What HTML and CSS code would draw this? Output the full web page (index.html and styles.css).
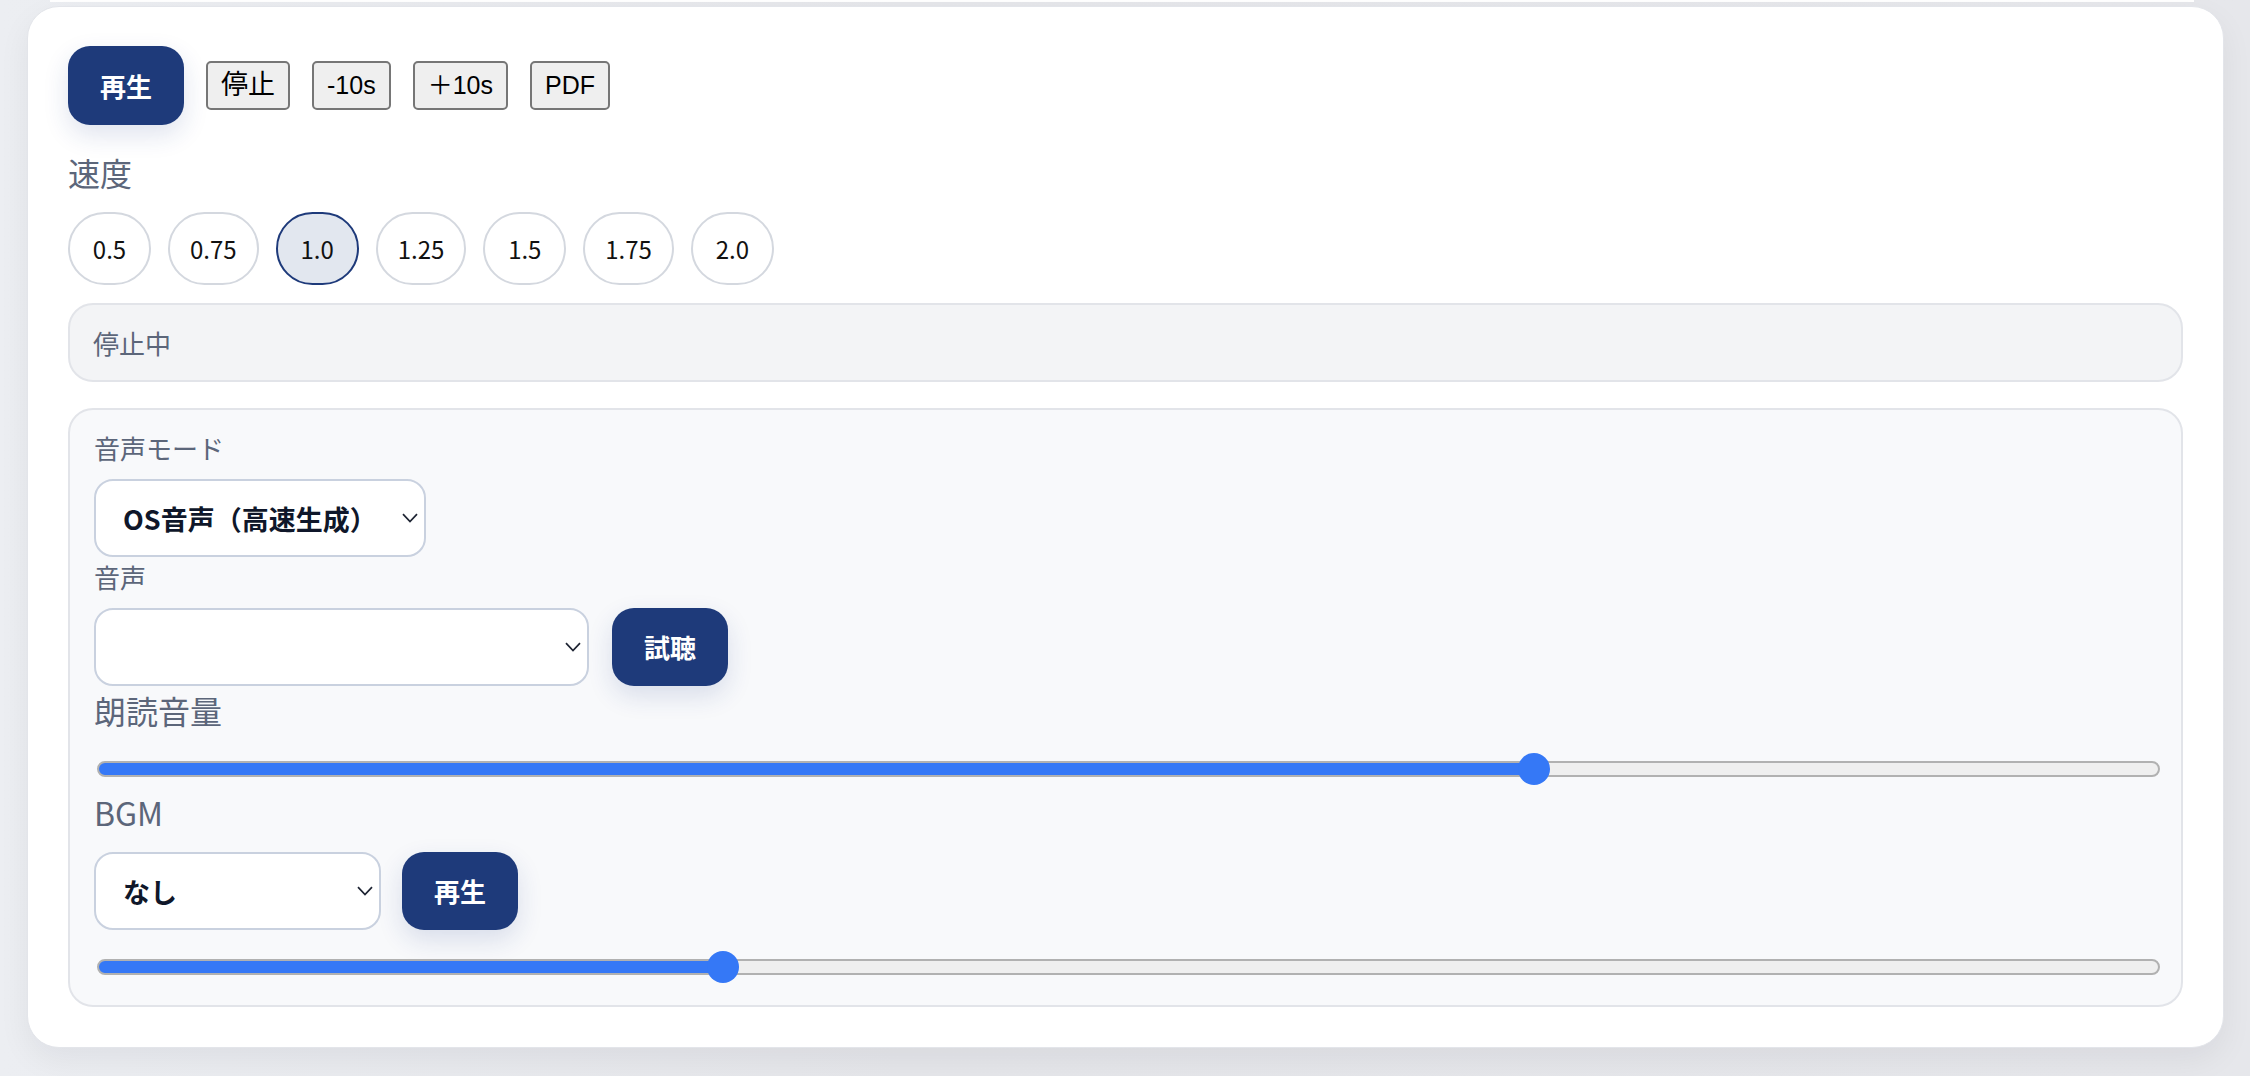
FILE: index.html
```html
<!DOCTYPE html>
<html lang="ja">
<head>
<meta charset="utf-8">
<title>Player</title>
<link rel="stylesheet" href="styles.css">
</head>
<body>
<div class="page">
  <div class="prev-edge"></div>
  <main class="card">
    <div class="controls">
      <button class="btn-primary">再生</button>
      <button class="btn-plain btn-cjk">停止</button>
      <button class="btn-plain">-10s</button>
      <button class="btn-plain">＋10s</button>
      <button class="btn-plain">PDF</button>
    </div>
    <div class="label-lg speed-label">速度</div>
    <div class="speeds">
      <button class="pill">0.5</button>
      <button class="pill">0.75</button>
      <button class="pill active">1.0</button>
      <button class="pill">1.25</button>
      <button class="pill">1.5</button>
      <button class="pill">1.75</button>
      <button class="pill">2.0</button>
    </div>
    <div class="status">停止中</div>
    <section class="panel">
      <div class="label-sm">音声モード</div>
      <div class="select-wrap mode">
        <select class="select"><option>OS音声（高速生成）</option></select>
        <svg class="chev" viewBox="0 0 16 10" aria-hidden="true"><path d="M1 1.2 L8 8.6 L15 1.2" fill="none" stroke="#1e2433" stroke-width="1.7"/></svg>
      </div>
      <div class="label-sm voice-label">音声</div>
      <div class="row">
        <div class="select-wrap voice">
          <select class="select"><option></option></select>
          <svg class="chev" viewBox="0 0 16 10" aria-hidden="true"><path d="M1 1.2 L8 8.6 L15 1.2" fill="none" stroke="#1e2433" stroke-width="1.7"/></svg>
        </div>
        <button class="btn-primary btn-row">試聴</button>
      </div>
      <div class="label-lg vol-label">朗読音量</div>
      <input class="range" type="range" min="0" max="100" value="70" style="--v:0.7">
      <div class="label-lg bgm-label">BGM</div>
      <div class="row bgm-row">
        <div class="select-wrap bgm">
          <select class="select"><option>なし</option></select>
          <svg class="chev" viewBox="0 0 16 10" aria-hidden="true"><path d="M1 1.2 L8 8.6 L15 1.2" fill="none" stroke="#1e2433" stroke-width="1.7"/></svg>
        </div>
        <button class="btn-primary btn-row">再生</button>
      </div>
      <input class="range" type="range" min="0" max="100" value="30" style="--v:0.3">
    </section>
  </main>
</div>
</body>
</html>
```
FILE: styles.css
```css
* { box-sizing: border-box; }
html, body { margin: 0; padding: 0; }
body {
  width: 2250px;
  height: 1076px;
  overflow: hidden;
  background: linear-gradient(90deg, #eceef2 0%, #e5e6ea 40%, #e6e7eb 100%);
  font-family: "Noto Sans CJK JP", "Noto Sans", sans-serif;
}
.page { padding: 0 26px 0 27px; }
.prev-edge {
  height: 2px;
  margin: 0 30px 4px 23px;
  background: #ffffff;
}
.card {
  background: #ffffff;
  border: 1px solid #e3e5ea;
  border-radius: 32px;
  padding: 39px 40px 40px;
  box-shadow: 0 12px 32px rgba(15, 23, 42, 0.06);
}
.controls {
  display: flex;
  align-items: center;
  gap: 22px;
}
.btn-primary {
  height: 79px;
  padding: 0 32px;
  border: 0;
  border-radius: 22px;
  background: #1e3a7a;
  color: #ffffff;
  font: 700 26px/1 "Noto Sans CJK JP", sans-serif;
  box-shadow: 0 10px 26px rgba(30, 58, 138, 0.14);
}
.btn-row { height: 78px; }
.btn-plain {
  height: 49px;
  padding: 0 13px;
  border: 2px solid #767676;
  border-radius: 5px;
  background: #efefef;
  color: #000000;
  font: 400 25px/1 "Liberation Sans", "Noto Sans CJK JP", sans-serif;
}
.btn-plain.btn-cjk { font-size: 27px; }
.label-lg {
  font-size: 32px;
  line-height: 44px;
  color: #5c667a;
}
.label-sm {
  font-size: 26px;
  line-height: 36px;
  color: #5c667a;
}
.speed-label { margin-top: 25px; }
.speeds {
  display: flex;
  gap: 17px;
  margin-top: 18px;
}
.pill {
  min-width: 83px;
  height: 73px;
  padding: 0 20px;
  border: 2px solid #d4d8df;
  border-radius: 999px;
  background: #ffffff;
  color: #111111;
  font: 400 24px/1 "Noto Sans CJK JP", sans-serif;
}
.pill.active {
  background: #e2e7ef;
  border-color: #1e3a7a;
}
.status {
  margin-top: 18px;
  height: 79px;
  display: flex;
  align-items: center;
  padding: 0 23px;
  background: #f3f4f6;
  border: 2px solid #e2e4e9;
  border-radius: 25px;
  font-size: 26px;
  line-height: 36px;
  color: #5c667a;
}
.panel {
  margin-top: 26px;
  background: #f8f9fb;
  border: 2px solid #e2e4e9;
  border-radius: 25px;
  padding: 20px 24px 22px;
}
.select-wrap {
  position: relative;
  height: 78px;
}
.select-wrap.mode { width: 332px; margin-top: 13px; }
.select-wrap.voice { width: 495px; }
.select-wrap.bgm { width: 287px; }
.select {
  -webkit-appearance: none;
  appearance: none;
  display: block;
  width: 100%;
  height: 100%;
  margin: 0;
  padding: 0 40px 0 27px;
  border: 2px solid #c9d1df;
  border-radius: 19px;
  background: #ffffff;
  color: #0f172a;
  font: 700 27px "Noto Sans CJK JP", sans-serif;
}
.chev {
  position: absolute;
  right: 8px;
  top: 50%;
  width: 16px;
  height: 10px;
  margin-top: -5px;
  pointer-events: none;
}
.voice-label { margin-top: 2px; }
.row {
  display: flex;
  align-items: center;
  gap: 23px;
  margin-top: 13px;
}
.vol-label { margin-top: 2px; }
.bgm-label { margin-top: 5px; }
.row.bgm-row { margin-top: 18px; gap: 21px; }
.range {
  -webkit-appearance: none;
  appearance: none;
  display: block;
  width: 100%;
  height: 32px;
  margin: 21px 0 0 3px;
  padding: 0;
  background: transparent;
}
.range::-webkit-slider-runnable-track {
  height: 16px;
  border-radius: 8px;
  border: 2px solid #b1b1b1;
  background: linear-gradient(to right, #3578f6 calc(16px + (100% - 32px) * var(--v)), #efefef 0);
}
.range::-webkit-slider-thumb {
  -webkit-appearance: none;
  appearance: none;
  width: 32px;
  height: 32px;
  margin-top: -10px;
  border: 0;
  border-radius: 50%;
  background: #3578f6;
}
```
